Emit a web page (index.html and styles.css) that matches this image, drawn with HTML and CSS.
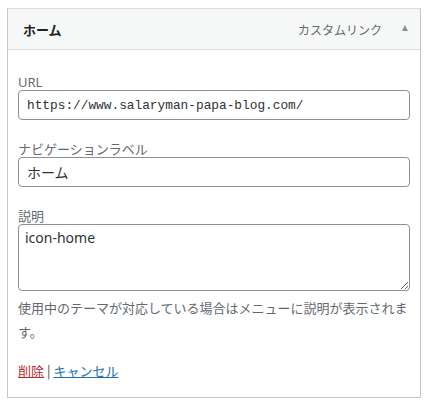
FILE: index.html
```html
<!DOCTYPE html>
<html lang="ja">
<head>
<meta charset="utf-8">
<link rel="stylesheet" href="styles.css">
</head>
<body>
<div class="panel">
  <div class="handle">
    <span class="item-title">ホーム</span>
    <span class="item-type">カスタムリンク</span>
    <span class="toggle"></span>
  </div>
  <div class="settings">
    <div class="field">
      <label class="lbl lbl-latin">URL</label>
      <input class="input code" type="text" value="https://www.salaryman-papa-blog.com/">
    </div>
    <div class="field">
      <label class="lbl">ナビゲーションラベル</label>
      <input class="input" type="text" value="ホーム">
    </div>
    <div class="field field-last">
      <label class="lbl">説明</label>
      <textarea class="textarea">icon-home</textarea>
    </div>
    <p class="help">使用中のテーマが対応している場合はメニューに説明が表示されます。</p>
    <div class="actions"><a class="del" href="#">削除</a> <span class="sep">|</span> <a class="cancel" href="#">キャンセル</a></div>
  </div>
</div>
</body>
</html>
```
FILE: styles.css
```css
* { box-sizing: border-box; }
html, body { margin: 0; padding: 0; background: #fff; }
body {
  font-family: "Noto Sans", "Noto Sans CJK JP", sans-serif;
  font-size: 13px;
  color: #3c434a;
  padding: 8px 0 0 7px;
}
.panel {
  width: 414px;
  border: 1px solid #c3c4c7;
  border-top-color: #dcdcde;
  background: #fff;
}
.handle {
  display: flex;
  align-items: center;
  height: 41px;
  background: #f6f7f7;
  border-bottom: 1px solid #dcdcde;
  padding: 0 12px 0 15px;
}
.item-title {
  flex: 1;
  font-family: "Noto Sans CJK JP", sans-serif;
  font-weight: 700;
  font-size: 13px;
  color: #1d2327;
}
.item-type {
  font-family: "Noto Sans CJK JP", sans-serif;
  font-size: 12px;
  color: #646970;
  margin-right: 20px;
}
.toggle {
  width: 0;
  height: 0;
  border-left: 3.5px solid transparent;
  border-right: 3.5px solid transparent;
  border-bottom: 6px solid #8c8f94;
  margin-top: -2px;
}
.settings {
  padding: 24px 10px 17px 10px;
}
.field { display: flex; flex-direction: column; margin-bottom: 21px; }
.field-last { margin-bottom: 5px; }
.lbl {
  display: block;
  font-family: "Noto Sans CJK JP", sans-serif;
  font-size: 13px;
  line-height: 16px;
  color: #646970;
}
.lbl-latin { font-family: "Noto Sans", sans-serif; }
.input {
  display: block;
  width: 100%;
  height: 30px;
  margin: 0;
  border: 1px solid #8c8f94;
  border-radius: 4px;
  padding: 0 8px;
  font-family: "Noto Sans CJK JP", sans-serif;
  font-size: 14px;
  color: #2c3338;
  background: #fff;
}
.code {
  font-family: "Liberation Mono", monospace;
  font-size: 12.8px;
}
.textarea {
  display: block;
  width: 100%;
  height: 67px;
  margin: 0;
  border: 1px solid #8c8f94;
  border-radius: 4px;
  padding: 3px 6px 2px;
  font-family: "Noto Sans", "Noto Sans CJK JP", sans-serif;
  font-size: 14px;
  line-height: 20px;
  color: #2c3338;
  background: #fff;
}
.help {
  margin: 0;
  font-family: "Noto Sans CJK JP", sans-serif;
  font-size: 13px;
  line-height: 24px;
  color: #646970;
}
.actions {
  margin-top: 18px;
  font-family: "Noto Sans CJK JP", sans-serif;
  font-size: 13px;
  line-height: 18px;
}
.del { color: #b32d2e; text-decoration: underline; }
.cancel { color: #2271b1; text-decoration: underline; }
.sep { color: #3c434a; }
```
